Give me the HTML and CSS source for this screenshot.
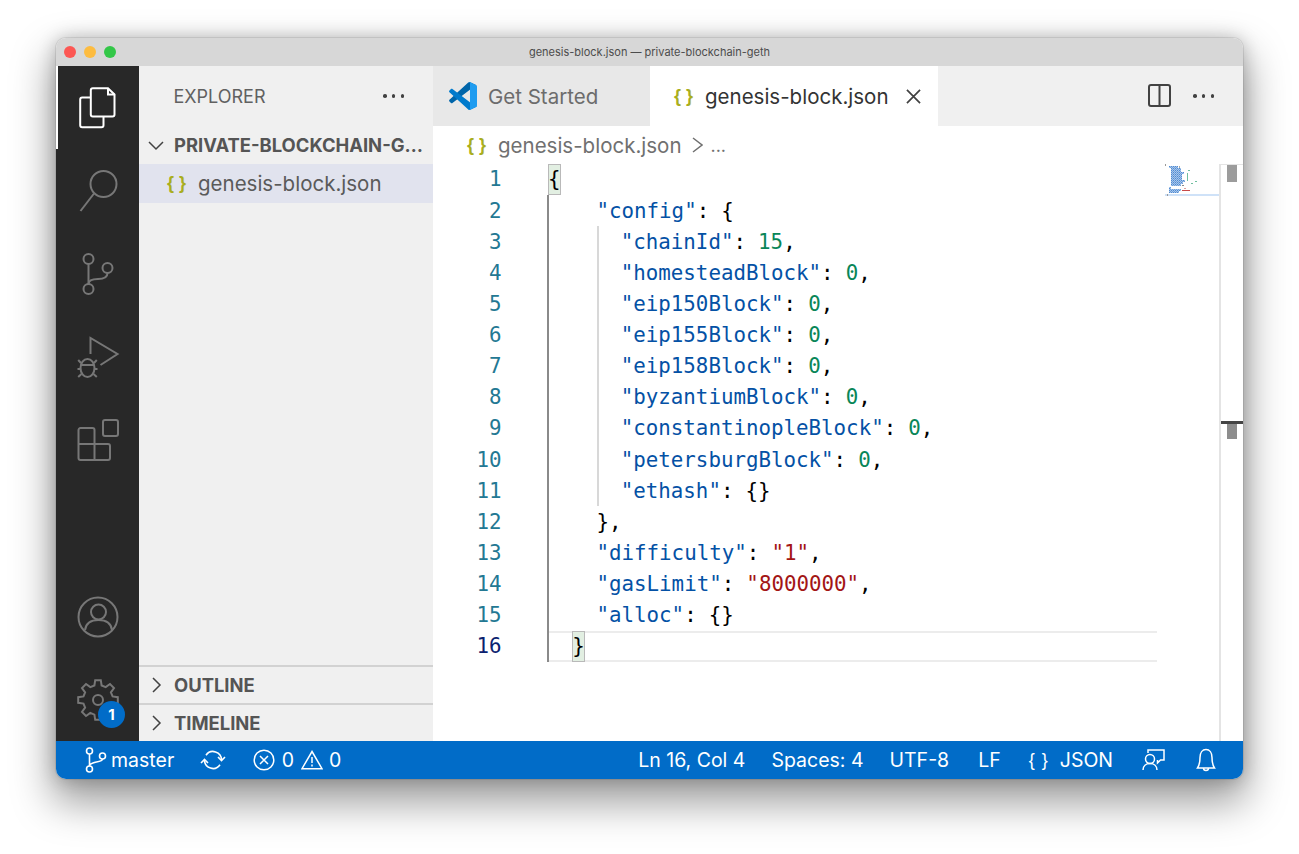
FILE: index.html
```html
<!DOCTYPE html>
<html lang="en">
<head>
<meta charset="utf-8">
<title>genesis-block.json — private-blockchain-geth</title>
<link rel="stylesheet" href="styles.css">
</head>
<body>
<div class="window">
  <header class="titlebar">
    <div class="lights"><i class="light red"></i><i class="light yellow"></i><i class="light green"></i></div>
    <div class="title">genesis-block.json — private-blockchain-geth</div>
  </header>
  <div class="workbench">
    <nav class="activity">
      <div class="act active">
        <svg class="ai" viewBox="0 0 42 42"><path d="M13.8 10.5H5.2a2 2 0 0 0-2 2V38.2a2 2 0 0 0 2 2H24.5a2 2 0 0 0 2-2V29.5"/><path d="M15.8 1.2H31L37.5 7.500V27.5a2 2 0 0 1-2 2H15.8a2 2 0 0 1-2-2V3.2a2 2 0 0 1 2-2Z"/><path d="M31 1.200V7.500H37.500"/></svg>
      </div>
      <div class="act">
        <svg class="ai" viewBox="0 0 42 42"><circle cx="26.5" cy="14" r="13"/><path d="M17 23.5L3.5 41"/></svg>
      </div>
      <div class="act">
        <svg class="ai" viewBox="0 0 42 42"><circle cx="11.5" cy="6" r="5"/><circle cx="30.5" cy="15" r="5"/><circle cx="11.5" cy="36" r="5"/><path d="M11.5 11V31"/><path d="M30.5 20C30.5 25 26 26 21 26C16 26 11.5 27 11.5 31"/></svg>
      </div>
      <div class="act">
        <svg class="ai" viewBox="0 0 42 42"><path d="M13.5 18V2L40.5 18L23.5 29"/><ellipse cx="10.500" cy="32" rx="7" ry="9"/><path d="M4 29H17M.5 33H3.500M17.500 33H20.500M1.200 24L4 27M19.800 24L17 27M1.200 41L4.500 38M19.800 41L16.500 38"/></svg>
      </div>
      <div class="act">
        <svg class="ai" viewBox="0 0 42 42"><rect x="26" y="1" width="15" height="16" rx="2"/><path d="M3.5 9H15.5a2 2 0 0 1 2 2V41H3.5a2 2 0 0 1-2-2V11a2 2 0 0 1 2-2Z"/><path d="M1.5 25H31a2 2 0 0 1 2 2V39a2 2 0 0 1-2 2H17.5"/></svg>
      </div>
      <div class="act-spacer"></div>
      <div class="act">
        <svg class="ai" viewBox="0 0 42 42"><circle cx="21" cy="21" r="19.5"/><circle cx="21.5" cy="16" r="7.5"/><path d="M8 34C9 27 14 24 21.500 24S34 27 35 34"/></svg>
      </div>
      <div class="act">
        <svg class="ai" viewBox="0 0 42 42"><polygon points="18.200,1.200 23.800,1.200 24.600,6.500 28.700,8.100 33,5 37,9 33.900,13.300 35.600,17.400 40.800,18.200 40.800,23.800 35.600,24.600 33.900,28.700 37,33 33,37 28.700,33.900 24.600,35.600 23.800,40.800 18.200,40.800 17.400,35.600 13.300,33.900 9,37 5,33 8.100,28.700 6.500,24.600 1.200,23.800 1.200,18.200 6.500,17.400 8.100,13.300 5,9 9,5 13.300,8.100 17.400,6.500"/><circle cx="21" cy="21" r="5"/></svg>
        <span class="badge">1</span>
      </div>
    </nav>
    <aside class="sidebar">
      <div class="side-head">
        <span class="side-title">EXPLORER</span>
        <span class="dots"><i></i><i></i><i></i></span>
      </div>
      <div class="section-head">
        <svg class="chev" viewBox="0 0 16 16"><path d="M1 5L8 12L15 5"/></svg>
        <span class="section-name">PRIVATE-BLOCKCHAIN-GETH</span>
      </div>
      <div class="file-row"><span class="braces">{ }</span><span>genesis-block.json</span></div>
      <div class="side-fill"></div>
      <div class="pane-head"><svg class="chev" viewBox="0 0 16 16"><path d="M5 1L12 8L5 15"/></svg><span class="section-name">OUTLINE</span></div>
      <div class="pane-head"><svg class="chev" viewBox="0 0 16 16"><path d="M5 1L12 8L5 15"/></svg><span class="section-name">TIMELINE</span></div>
    </aside>
    <main class="main">
      <div class="tabs">
        <div class="tab tab-idle">
          <svg class="vsc" viewBox="0 0 100 100"><path fill="#0065a9" d="M96.400 10.800L75.900.9C73.500-.2 70.700.2 68.800 2.100L1.600 63.400C-.2 65.100-.2 67.900 1.600 69.600L7.100 74.600C8.600 75.900 10.800 76 12.400 74.800L93.400 13.300C96.100 11.300 100 13.200 100 16.600V16.400C100 14 98.600 11.800 96.400 10.800Z"/><path fill="#007acc" d="M96.400 89.200L75.900 99.100C73.500 100.200 70.700 99.800 68.800 97.900L1.600 36.600C-.2 34.900-.2 32.100 1.600 30.400L7.100 25.400C8.600 24.100 10.800 24 12.400 25.200L93.400 86.700C96.100 88.700 100 86.800 100 83.400V83.600C100 86 98.600 88.200 96.400 89.200Z"/><path fill="#1f9cf0" d="M75.900 99.100C73.500 100.300 70.700 99.800 68.800 97.900C71.100 100.200 75 98.600 75 95.300V4.700C75 1.400 71.100-.2 68.800 2.100C70.700.2 73.500-.2 75.900.9L96.400 10.800C98.600 11.800 100 14 100 16.400V83.600C100 86 98.600 88.200 96.400 89.200Z"/></svg>
          <span>Get Started</span>
        </div>
        <div class="tab tab-active">
          <span class="braces">{ }</span>
          <span>genesis-block.json</span>
          <svg class="close" viewBox="0 0 16 16"><path d="M1 1L15 15M15 1L1 15"/></svg>
        </div>
        <div class="tab-actions">
          <svg class="split" viewBox="0 0 24 24"><rect x="1" y="1" width="21" height="21" rx="2"/><path d="M11.500 1V22"/></svg>
          <span class="dots"><i></i><i></i><i></i></span>
        </div>
      </div>
      <div class="crumbs">
        <span class="braces">{ }</span>
        <span>genesis-block.json</span>
        <svg class="crumb-chev" viewBox="0 0 12 16"><path d="M2 1L11 8L2 15"/></svg>
        <span class="crumb-more">...</span>
      </div>
      <div class="editor">
        <div class="gutter">
          <div>1</div><div>2</div><div>3</div><div>4</div><div>5</div><div>6</div><div>7</div><div>8</div><div>9</div><div>10</div><div>11</div><div>12</div><div>13</div><div>14</div><div>15</div><div class="cur">16</div>
        </div>
        <div class="code">
          <div class="guide-outer"></div>
          <div class="guide-inner"></div>
          <div class="line"><span class="bm">{</span></div>
          <div class="line">    <span class="k">"config"</span>: {</div>
          <div class="line">      <span class="k">"chainId"</span>: <span class="n">15</span>,</div>
          <div class="line">      <span class="k">"homesteadBlock"</span>: <span class="n">0</span>,</div>
          <div class="line">      <span class="k">"eip150Block"</span>: <span class="n">0</span>,</div>
          <div class="line">      <span class="k">"eip155Block"</span>: <span class="n">0</span>,</div>
          <div class="line">      <span class="k">"eip158Block"</span>: <span class="n">0</span>,</div>
          <div class="line">      <span class="k">"byzantiumBlock"</span>: <span class="n">0</span>,</div>
          <div class="line">      <span class="k">"constantinopleBlock"</span>: <span class="n">0</span>,</div>
          <div class="line">      <span class="k">"petersburgBlock"</span>: <span class="n">0</span>,</div>
          <div class="line">      <span class="k">"ethash"</span>: {}</div>
          <div class="line">    },</div>
          <div class="line">    <span class="k">"difficulty"</span>: <span class="s">"1"</span>,</div>
          <div class="line">    <span class="k">"gasLimit"</span>: <span class="s">"8000000"</span>,</div>
          <div class="line">    <span class="k">"alloc"</span>: {}</div>
          <div class="line line-cur">  <span class="bm">}</span></div>
        </div>
        <div class="minimap">
          <svg class="mini" viewBox="0 0 54 32">
            <defs>
              <pattern id="dither" width="2" height="2" patternUnits="userSpaceOnUse">
                <rect width="2" height="2" fill="#a8c6ea"/>
                <rect width="1" height="1" fill="#4f8bd3"/>
                <rect x="1" y="1" width="1" height="1" fill="#6fa0dc"/>
              </pattern>
            </defs>
            <rect x="0" y="30" width="54" height="2" fill="#cfe2f8"/>
            <rect x="0" y="0" width="1" height="2" fill="#999"/>
            <rect x="4" y="2" width="9" height="2" fill="url(#dither)"/><rect x="14" y="2" width="1" height="2" fill="#aaa"/>
            <g fill="url(#dither)">
              <rect x="6" y="4" width="10" height="2"/>
              <rect x="6" y="6" width="10" height="2"/>
              <rect x="6" y="8" width="13" height="2"/>
              <rect x="6" y="10" width="11" height="2"/>
              <rect x="6" y="12" width="11" height="2"/>
              <rect x="6" y="14" width="11" height="2"/>
              <rect x="6" y="16" width="14" height="2"/>
              <rect x="6" y="18" width="12" height="2"/>
              <rect x="6" y="20" width="10" height="2"/>
              <rect x="4" y="23" width="2" height="2"/>
              <rect x="4" y="25" width="12" height="2"/>
              <rect x="4" y="27" width="10" height="2"/>
            </g>
            <g fill="#6fbf9f">
              <rect x="23" y="6" width="2" height="1"/>
              <rect x="22" y="9" width="1" height="8"/>
              <rect x="30" y="17" width="2" height="1"/>
              <rect x="26" y="19" width="2" height="1"/>
            </g>
            <rect x="17" y="21" width="2" height="1" fill="#888"/>
            <rect x="19" y="24" width="2" height="1" fill="#e0a0a0"/>
            <rect x="17" y="26" width="8" height="1" fill="#c84a4a"/>
            <rect x="2" y="30" width="1" height="2" fill="#999"/>
          </svg>
        </div>
        <div class="ruler">
          <div class="thumb"></div>
          <div class="cursor-mark"></div>
          <div class="cursor-thumb"></div>
        </div>
      </div>
    </main>
  </div>
  <footer class="status">
    <div class="st-group">
      <svg class="st-branch" viewBox="0 0 22 26"><circle cx="4.500" cy="4" r="3"/><circle cx="17.500" cy="9" r="3"/><circle cx="4.500" cy="22" r="3"/><path d="M4.500 7V19M17.500 12C17.500 16 4.500 14 4.500 19"/></svg>
      <span class="st-master">master</span>
      <svg class="st-sync" viewBox="0 0 24 20"><path d="M5 5.200A8.500 8.500 0 0 1 20.500 10"/><path d="M19 14.800A8.500 8.500 0 0 1 3.500 10"/><path d="M17 7L20.500 10.500L24 7"/><path d="M0 13L3.500 9.500L7 13"/></svg>
      <svg class="st-err" viewBox="0 0 22 22"><circle cx="11" cy="11" r="9.800"/><path d="M7 7L15 15M15 7L7 15"/></svg>
      <span class="st-zero">0</span>
      <svg class="st-warn" viewBox="0 0 22 20"><path d="M11 1.500L21 18.700H1Z"/><path d="M11 7V13M11 14.500V16.500"/></svg>
      <span class="st-zero">0</span>
    </div>
    <div class="st-group st-right">
      <span class="st-ln">Ln 16, Col 4</span>
      <span class="st-sp">Spaces: 4</span>
      <span class="st-enc">UTF-8</span>
      <span class="st-lf">LF</span>
      <span class="st-brace">{ }</span>
      <span class="st-json">JSON</span>
      <svg class="st-feed" viewBox="0 0 24 24"><path d="M6 5V2H22V12H18.500L15.500 15V12"/><circle cx="8" cy="11" r="4.500"/><path d="M1 22C1 18 4 15.500 8 15.500S15 18 15 22"/></svg>
      <svg class="st-bell" viewBox="0 0 20 24"><path d="M1.500 20C3.500 17 4 14 4 9.500C4 4.500 6.500 1.500 10 1.500S16 4.500 16 9.500C16 14 16.500 17 18.500 20Z"/><path d="M7.500 20a2.500 2.500 0 0 0 5 0"/></svg>
    </div>
  </footer>
</div>
</body>
</html>
```
FILE: styles.css
```css
* { box-sizing: border-box; }
html, body { margin: 0; height: 100%; background: #fff; overflow: hidden; }
body { padding: 38px 56px 0; font-family: Inter, "Liberation Sans", sans-serif; }

.window {
  width: 1187px;
  height: 741px;
  display: flex;
  flex-direction: column;
  border-radius: 10px;
  overflow: hidden;
  box-shadow: 0 0 0 1px rgba(0,0,0,.08), 0 20px 40px 4px rgba(0,0,0,.38), 0 0 18px rgba(0,0,0,.22);
}

.titlebar {
  height: 28px;
  flex: none;
  background: #d7d7d7;
  display: flex;
  align-items: center;
  position: relative;
  justify-content: center;
}
.lights { position: absolute; left: 8px; top: 8px; display: flex; gap: 8px; }
.light { width: 12px; height: 12px; border-radius: 50%; display: block; }
.red { background: #fc5753; }
.yellow { background: #fdbc40; }
.green { background: #33c748; }
.title { font-size: 11px; color: #4c4c4c; }

.workbench { flex: 1; display: flex; min-height: 0; }

.activity {
  width: 83px;
  flex: none;
  background: #282828;
  display: flex;
  flex-direction: column;
}
.act {
  height: 83px;
  flex: none;
  display: flex;
  align-items: center;
  justify-content: center;
  position: relative;
}
.act-spacer { flex: 1; }
.act.active { box-shadow: inset 2px 0 0 #fff; }
.ai { width: 42px; height: 42px; fill: none; stroke: #777; stroke-width: 2; overflow: visible; }
.active .ai { stroke: #fff; }
.badge {
  position: absolute;
  left: 42px;
  top: 43px;
  width: 27px;
  height: 27px;
  border-radius: 50%;
  background: #016cc8;
  color: #fff;
  font-size: 15px;
  font-weight: 700;
  display: flex;
  align-items: center;
  justify-content: center;
}

.sidebar {
  width: 294px;
  flex: none;
  background: #f0f0f0;
  display: flex;
  flex-direction: column;
  color: #616161;
}
.side-head {
  height: 60px;
  flex: none;
  display: flex;
  align-items: center;
  justify-content: space-between;
  padding: 0 29px 0 34.500px;
}
.side-title { font-size: 18px; }
.dots { display: flex; gap: 5.200px; }
.dots i { width: 3.500px; height: 3.500px; border-radius: 50%; background: #424242; display: block; }
.section-head {
  height: 38px;
  flex: none;
  display: flex;
  align-items: center;
  padding: 0 9px;
}
.chev { width: 16px; height: 16px; flex: none; fill: none; stroke: #424242; stroke-width: 1.500; margin-right: 10px; }
.section-name {
  font-size: 18.400px;
  font-weight: 700;
  color: #555;
  white-space: nowrap;
  overflow: hidden;
  text-overflow: ellipsis;
  min-width: 0;
}
.file-row {
  height: 39px;
  flex: none;
  background: #e1e3ee;
  display: flex;
  align-items: center;
  padding-left: 28px;
  font-size: 20.500px;
  color: #5a5a5a;
}
.braces {
  font-family: "Liberation Sans", sans-serif;
  font-size: 18px;
  font-weight: 700;
  color: #a9ae1e;
  width: 31px;
  flex: none;
  white-space: pre;
}
.side-fill { flex: 1; }
.pane-head {
  height: 38px;
  flex: none;
  border-top: 2px solid #d2d2d2;
  display: flex;
  align-items: center;
  padding-left: 9px;
}

.main { flex: 1; min-width: 0; display: flex; flex-direction: column; background: #fff; }
.tabs { height: 60px; flex: none; background: #f0f0f0; display: flex; align-items: stretch; }
.tab { display: flex; align-items: center; font-size: 20.500px; }
.tab-idle { width: 217px; background: #e8e8e8; color: #6c6c6c; padding-left: 16px; }
.vsc { width: 28px; height: 28px; margin-right: 11px; flex: none; }
.tab-active { width: 288px; background: #fff; color: #333; padding-left: 24px; }
.close { width: 15px; height: 15px; margin-left: 17px; fill: none; stroke: #424242; stroke-width: 1.800; flex: none; }
.tab-actions { flex: 1; display: flex; align-items: center; justify-content: flex-end; padding-right: 29px; gap: 21px; }
.split { width: 24px; height: 24px; fill: none; stroke: #424242; stroke-width: 2; }

.crumbs {
  height: 38px;
  flex: none;
  display: flex;
  align-items: center;
  padding-left: 34px;
  font-size: 20.500px;
  color: #707070;
}
.crumb-chev { width: 12px; height: 16px; margin: 0 8px 0 9px; fill: none; stroke: #707070; stroke-width: 1.500; flex: none; }
.crumb-more { font-size: 18px; }

.editor {
  flex: 1;
  min-height: 0;
  display: flex;
  font-family: "DejaVu Sans Mono", monospace;
  font-size: 20.800px;
  line-height: 31.130px;
}
.gutter { width: 115px; flex: none; padding: .45px 46.500px 0 0; text-align: right; color: #237893; }
.gutter .cur { color: #0b216f; }
.code { width: 609px; flex: none; position: relative; color: #000; padding-top: .45px; word-spacing: -.4px; }
.line { height: 31.130px; white-space: pre; }
.line-cur { box-shadow: inset 0 2px 0 #ececec, inset 0 -2px 0 #ececec; }
.k { color: #0451a5; }
.n { color: #098658; }
.s { color: #a31515; }
.bm { display: inline-block; background: #e2efe2; box-shadow: inset 0 0 0 1px #b9b9b9; height: 31px; vertical-align: top; }
.guide-outer { position: absolute; left: -1px; top: 31px; height: 467px; width: 2px; background: #8a8a8a; }
.guide-inner { position: absolute; left: 49px; top: 62px; height: 280px; width: 2px; background: #d8d8d8; }

.minimap { width: 54px; margin-left: 8px; flex: none; }
.mini { display: block; width: 54px; height: 32px; }
.ruler { width: 24px; flex: none; border-left: 2px solid #e4e4e4; border-top: 1px solid #e4e4e4; position: relative; }
.thumb { position: absolute; left: 6px; top: 0; width: 10px; height: 17px; background: #9c9c9c; }
.cursor-mark { position: absolute; left: 0; right: 0; top: 256px; height: 3px; background: #444; }
.cursor-thumb { position: absolute; left: 6px; top: 259px; width: 10px; height: 15px; background: #8d8d8d; }

.status {
  height: 38px;
  flex: none;
  background: #016cc8;
  color: #fff;
  display: flex;
  align-items: center;
  justify-content: space-between;
  font-size: 19.500px;
}
.st-group { display: flex; align-items: center; }
.st-branch { width: 22px; height: 26px; margin-left: 29px; fill: none; stroke: #fff; stroke-width: 1.600; }
.st-master { margin-left: 4px; }
.st-sync { width: 24px; height: 20px; margin-left: 27px; fill: none; stroke: #fff; stroke-width: 1.600; overflow: visible; }
.st-err { width: 22px; height: 22px; margin-left: 28px; fill: none; stroke: #fff; stroke-width: 1.500; }
.st-zero { margin-left: 6.500px; }
.st-warn { width: 22px; height: 20px; margin-left: 6.500px; fill: none; stroke: #fff; stroke-width: 1.500; }
.st-right { padding-right: 27px; }
.st-sp { margin-left: 26px; }
.st-enc { margin-left: 26px; }
.st-lf { margin-left: 29px; }
.st-brace { margin-left: 28px; font-family: "Liberation Sans", sans-serif; font-size: 18px; white-space: pre; letter-spacing: 1px; }
.st-json { margin-left: 11px; }
.st-feed { width: 24px; height: 24px; margin-left: 29px; fill: none; stroke: #fff; stroke-width: 1.500; }
.st-bell { width: 20px; height: 24px; margin-left: 30px; fill: none; stroke: #fff; stroke-width: 1.500; }
```
